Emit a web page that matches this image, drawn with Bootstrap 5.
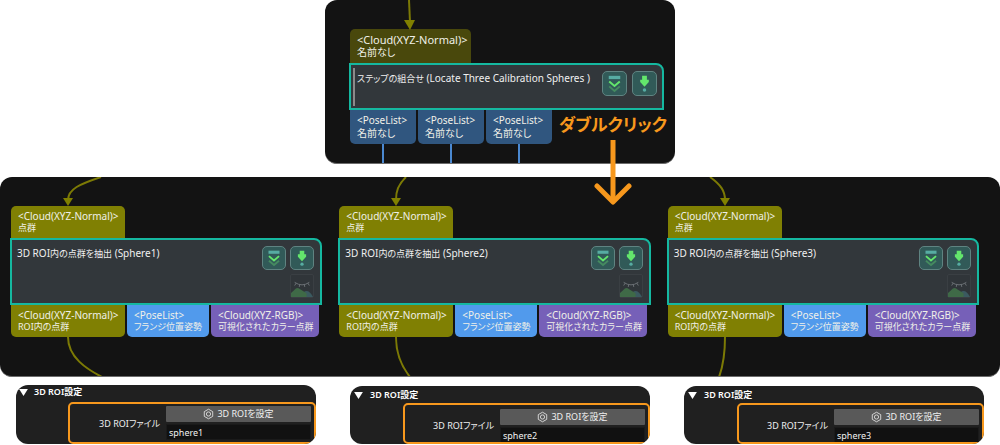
<!DOCTYPE html>
<html lang="ja">
<head>
<meta charset="utf-8">
<meta name="viewport" content="width=device-width, initial-scale=1">
<title>3D ROI設定</title>
<link href="https://cdn.jsdelivr.net/npm/bootstrap@5.3.0/dist/css/bootstrap.min.css" rel="stylesheet">
<style>
  body { background: #fff; color: #f0f0f0; font: 10px/12px "Noto Sans", "Noto Sans CJK JP", sans-serif; font-feature-settings: "palt"; }
  .canvas { background: #131313; border-radius: 12px; border-bottom: 1px solid #6c6c6c; overflow: hidden; }
  .canvas-top { width: 35%; padding: 0 11px 0 24px; line-height: 13px; overflow: visible; }
  .canvas-mid { margin-top: 13px; padding: 0 21px 0 10px; display: grid; grid-template-columns: repeat(3, minmax(0, 1fr)); gap: 16px; }
  .wire { display: block; fill: none; stroke: #7c7a05; stroke-width: 2; overflow: visible; }
  .wire polygon { fill: #808000; stroke: none; }
  .port { height: 32px; padding: 4px 7px; white-space: nowrap; color: #f0f0e8; }
  .port-name { display: block; font-size: 9px; }
  .canvas-top .port-name { font-size: 10px; }
  .jp { font-size: 9px; }
  .port-in { margin-left: 1px; border-radius: 5px 5px 0 0; }
  .port-out { border-radius: 0 0 5px 5px; }
  .cloud { background: #808003; width: 114px; }
  .pose { background: #519aec; width: 82px; }
  .rgb { background: #7660b8; width: 108px; }
  .ports { margin-left: 1px; }
  .port-row { gap: 2px; }
  .canvas-top .cloud { background: #49480c; width: 121px; height: 34px; font-size: 11px; }
  .canvas-top .pose { background: #30567f; width: 66px; height: 34px; }
  .step-box { background: #32373b; border: 2px solid #15b8a0; border-radius: 0 8px 0 0; height: 67px; padding: 6px 6px 0 5px; }
  .step-title { line-height: 14px; white-space: nowrap; }
  .canvas-top .step-box { height: 47px; padding: 3px 5px 2px 2px; }
  .canvas-top .step-title { border-left: 2px solid #8b8b8b; padding: 3px 0 0 2px; }
  .tool { width: 24px; height: 24px; padding: 0; background: #315a58; border: 1px solid #5f8381; border-radius: 5px; display: block; }
  .tool svg { display: block; width: 100%; height: 100%; }
  .tool-off { background: #303539; border-color: #3a3f43; border-radius: 2px; }
  .tools { display: grid; grid-template-columns: auto auto; gap: 4px; align-content: start; }
  .canvas-top .tools { gap: 5px; padding-top: 3px; }
  .canvas-top .tool { width: 25px; height: 25px; }
  .drop { width: 2px; height: 19px; background: #4a88d0; margin: 0 auto; }
  .hint { color: #f7981d; font-size: 17px; line-height: 30px; font-weight: 700; white-space: nowrap; margin-right: -3px; }
  .hint-arrow { left: 50%; top: 30px; transform: translateX(-50%); width: 38px; height: 66px; z-index: 2; }
  .settings { margin-top: 8px; padding: 0 16px; display: grid; grid-template-columns: repeat(3, minmax(0, 1fr)); gap: 34px; font-size: 9px; }
  .roi { background: #202020; border-radius: 12px; overflow: hidden; height: 59px; }
  .roi-head { height: 17px; padding: 0 0 3px 3px; font-weight: 600; color: #fff; }
  .roi-head svg { margin-right: 6px; }
  .roi-field { margin-left: 52px; height: 42px; border: 2px solid #f7981d; border-radius: 5px; padding: 2px 3px 0 0; display: grid; grid-template-columns: minmax(0, 1fr) 145px; column-gap: 6px; overflow: hidden; }
  .roi-field label { text-align: right; align-self: center; white-space: nowrap; }
  .roi-btn { display: flex; align-items: center; justify-content: center; gap: 3px; width: 100%; height: 16px; padding: 0; border: 0; border-radius: 1px; background: #595959; color: #f0f0f0; font-size: 9px; line-height: 14px; font-feature-settings: inherit; }
  .roi-input { display: block; width: 100%; height: 16px; margin-top: 2px; padding: 0 2px; border: 1px solid #1a1a1a; background: #111; color: #f0f0f0; font-size: 9px; line-height: 14px; }
  .roi-low { margin-top: 1px; height: 58px; }
  .roi-low .roi-head { padding: 1px 0 0 4px; }
  .roi-low .roi-head svg { margin-right: 7px; }
  .roi-low .roi-field { height: 41px; margin-left: 53px; padding-top: 4px; }
</style>
</head>
<body>
<svg width="0" height="0" class="position-absolute" aria-hidden="true">
  <symbol id="down" viewBox="0 0 24 24">
    <rect x="6" y="4" width="12" height="3.4" fill="#57aca3"/>
    <path d="M6.5 10 12 14.7 17.5 10" fill="none" stroke="#63e66c" stroke-width="2"/>
    <path d="M6.500 15 12 19.700 17.500 15" fill="none" stroke="#458a60" stroke-width="2"/>
  </symbol>
  <symbol id="run" viewBox="0 0 24 24">
    <path d="M9.500 4h5v4h2v2.500L12 15.500 7.500 10.500V8h2z" fill="#63e66c"/>
    <circle cx="12" cy="18.700" r="1.800" fill="#57aca3"/>
  </symbol>
  <symbol id="eye" viewBox="0 0 24 24">
    <path d="M4 8q8 5.500 16 0M5.500 9 4 11.500M9.500 10.500 9 13M14.500 10.500 15 13M18.500 9 20 11.500" fill="none" stroke="#70757a" stroke-width="1"/>
    <path d="M10 24Q17 11 24 24z" fill="#3b5a60"/>
    <path d="M0 24V19.500Q3 17 5 15Q7 13 10 15.500L17 20V24z" fill="#3f6a47"/>
  </symbol>
  <symbol id="hex" viewBox="0 0 12 12">
    <path d="M6 .8 10.600 3.400V8.600L6 11.200 1.400 8.600V3.400z" fill="none" stroke="#ddd"/>
    <circle cx="6" cy="6" r="2.300" fill="none" stroke="#ddd"/>
  </symbol>
  <symbol id="tri" viewBox="0 0 10 8"><path d="M0 0H10L5 8z" fill="#fff"/></symbol>
</svg>

<main>
  <section class="canvas canvas-top mx-auto">
    <svg class="wire" width="121" height="29"><path d="M60 0 61 22"/><polygon points="55,20 66,20 61,30"/></svg>
    <div class="port port-in cloud">&lt;Cloud(XYZ-Normal)&gt;<span class="port-name">名前なし</span></div>
    <div class="step-box d-flex justify-content-between">
      <div class="step-title"><span class="jp">ステップの組合せ</span> (Locate Three Calibration Spheres )</div>
      <div class="tools">
        <button class="tool" type="button" aria-label="展開"><svg><use href="#down"/></svg></button>
        <button class="tool" type="button" aria-label="実行"><svg><use href="#run"/></svg></button>
      </div>
    </div>
    <div class="ports d-flex">
      <div class="port-row d-flex">
        <div><div class="port port-out pose">&lt;PoseList&gt;<span class="port-name">名前なし</span></div><div class="drop"></div></div>
        <div><div class="port port-out pose">&lt;PoseList&gt;<span class="port-name">名前なし</span></div><div class="drop"></div></div>
        <div><div class="port port-out pose">&lt;PoseList&gt;<span class="port-name">名前なし</span></div><div class="drop"></div></div>
      </div>
      <div class="hint position-relative ms-auto">ダブルクリック
        <svg class="hint-arrow position-absolute" viewBox="0 0 38 66" fill="none" stroke="#f7981d" stroke-width="5"><path d="M19 0V61"/><path d="M3 46 19 62 35 46" stroke-linecap="round" stroke-linejoin="round"/></svg>
      </div>
    </div>
  </section>

  <section class="canvas canvas-mid">
    <div>
      <svg class="wire" width="114" height="29"><path d="M91 0C70 7 58 12 58 23"/><polygon points="53,21 63,21 58,29"/></svg>
      <div class="port port-in cloud">&lt;Cloud(XYZ-Normal)&gt;<span class="port-name">点群</span></div>
      <div class="step-box d-flex justify-content-between">
        <div class="step-title">3D ROI<span class="jp">内の点群を抽出</span> (Sphere1)</div>
        <div class="tools">
          <button class="tool" type="button" aria-label="展開"><svg><use href="#down"/></svg></button>
          <button class="tool" type="button" aria-label="実行"><svg><use href="#run"/></svg></button>
          <span></span>
          <button class="tool tool-off" type="button" aria-label="非表示"><svg><use href="#eye"/></svg></button>
        </div>
      </div>
      <div class="ports port-row d-flex">
        <div class="port port-out cloud">&lt;Cloud(XYZ-Normal)&gt;<span class="port-name">ROI内の点群</span></div>
        <div class="port port-out pose">&lt;PoseList&gt;<span class="port-name">フランジ位置姿勢</span></div>
        <div class="port port-out rgb">&lt;Cloud(XYZ-RGB)&gt;<span class="port-name">可視化されたカラー点群</span></div>
      </div>
      <svg class="wire" width="114" height="39"><path d="M58 0C58 20 76 32 94 41"/></svg>
    </div>
    <div>
      <svg class="wire" width="114" height="29"><path d="M68 0C60 8 58 14 58 23"/><polygon points="53,21 63,21 58,29"/></svg>
      <div class="port port-in cloud">&lt;Cloud(XYZ-Normal)&gt;<span class="port-name">点群</span></div>
      <div class="step-box d-flex justify-content-between">
        <div class="step-title">3D ROI<span class="jp">内の点群を抽出</span> (Sphere2)</div>
        <div class="tools">
          <button class="tool" type="button" aria-label="展開"><svg><use href="#down"/></svg></button>
          <button class="tool" type="button" aria-label="実行"><svg><use href="#run"/></svg></button>
          <span></span>
          <button class="tool tool-off" type="button" aria-label="非表示"><svg><use href="#eye"/></svg></button>
        </div>
      </div>
      <div class="ports port-row d-flex">
        <div class="port port-out cloud">&lt;Cloud(XYZ-Normal)&gt;<span class="port-name">ROI内の点群</span></div>
        <div class="port port-out pose">&lt;PoseList&gt;<span class="port-name">フランジ位置姿勢</span></div>
        <div class="port port-out rgb">&lt;Cloud(XYZ-RGB)&gt;<span class="port-name">可視化されたカラー点群</span></div>
      </div>
      <svg class="wire" width="114" height="39"><path d="M58 0C58 18 64 30 72 40"/></svg>
    </div>
    <div>
      <svg class="wire" width="114" height="29"><path d="M43 0C54 8 58 14 58 23"/><polygon points="53,21 63,21 58,29"/></svg>
      <div class="port port-in cloud">&lt;Cloud(XYZ-Normal)&gt;<span class="port-name">点群</span></div>
      <div class="step-box d-flex justify-content-between">
        <div class="step-title">3D ROI<span class="jp">内の点群を抽出</span> (Sphere3)</div>
        <div class="tools">
          <button class="tool" type="button" aria-label="展開"><svg><use href="#down"/></svg></button>
          <button class="tool" type="button" aria-label="実行"><svg><use href="#run"/></svg></button>
          <span></span>
          <button class="tool tool-off" type="button" aria-label="非表示"><svg><use href="#eye"/></svg></button>
        </div>
      </div>
      <div class="ports port-row d-flex">
        <div class="port port-out cloud">&lt;Cloud(XYZ-Normal)&gt;<span class="port-name">ROI内の点群</span></div>
        <div class="port port-out pose">&lt;PoseList&gt;<span class="port-name">フランジ位置姿勢</span></div>
        <div class="port port-out rgb">&lt;Cloud(XYZ-RGB)&gt;<span class="port-name">可視化されたカラー点群</span></div>
      </div>
      <svg class="wire" width="114" height="39"><path d="M58 0Q58 24 52 40"/></svg>
    </div>
  </section>

  <section class="settings">
    <div class="roi">
      <div class="roi-head d-flex align-items-center"><svg width="9" height="7"><use href="#tri"/></svg><span>3D ROI設定</span></div>
      <div class="roi-field">
        <label for="roi1">3D ROIファイル</label>
        <div>
          <button class="roi-btn" type="button"><svg width="11" height="12"><use href="#hex"/></svg><span>3D ROIを設定</span></button>
          <input class="roi-input" id="roi1" type="text" value="sphere1">
        </div>
      </div>
    </div>
    <div class="roi roi-low">
      <div class="roi-head d-flex align-items-center"><svg width="9" height="7"><use href="#tri"/></svg><span>3D ROI設定</span></div>
      <div class="roi-field">
        <label for="roi2">3D ROIファイル</label>
        <div>
          <button class="roi-btn" type="button"><svg width="11" height="12"><use href="#hex"/></svg><span>3D ROIを設定</span></button>
          <input class="roi-input" id="roi2" type="text" value="sphere2">
        </div>
      </div>
    </div>
    <div class="roi roi-low">
      <div class="roi-head d-flex align-items-center"><svg width="9" height="7"><use href="#tri"/></svg><span>3D ROI設定</span></div>
      <div class="roi-field">
        <label for="roi3">3D ROIファイル</label>
        <div>
          <button class="roi-btn" type="button"><svg width="11" height="12"><use href="#hex"/></svg><span>3D ROIを設定</span></button>
          <input class="roi-input" id="roi3" type="text" value="sphere3">
        </div>
      </div>
    </div>
  </section>
</main>
<script src="https://cdn.jsdelivr.net/npm/bootstrap@5.3.0/dist/js/bootstrap.bundle.min.js"></script>
</body>
</html>
